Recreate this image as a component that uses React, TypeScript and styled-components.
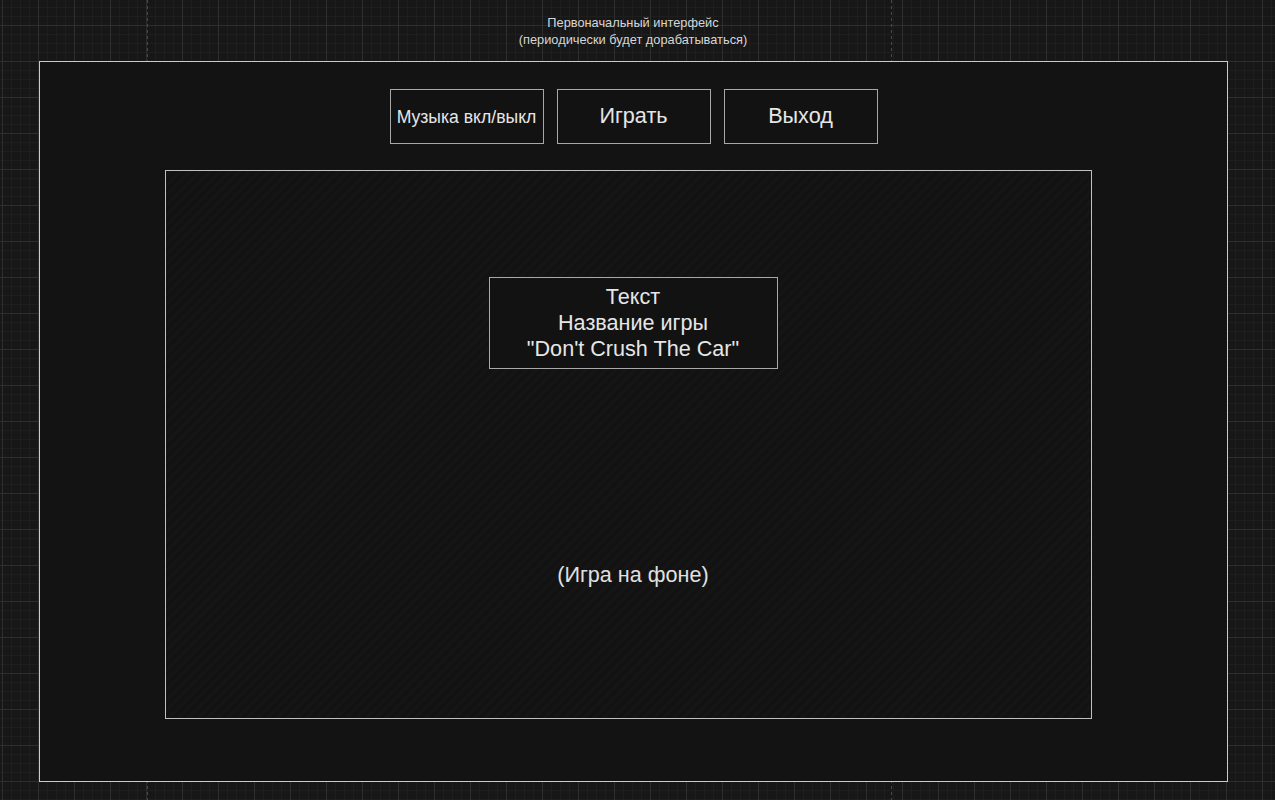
import React from "react";
import styled, { createGlobalStyle } from "styled-components";

const Global = createGlobalStyle`
  html, body { margin: 0; padding: 0; }
  body {
    width: 1275px;
    height: 800px;
    overflow: hidden;
    font-family: "Liberation Sans", Arial, sans-serif;
    background-color: #171717;
    background-image:
      repeating-linear-gradient(to bottom, #4a4a4a 0 3px, transparent 3px 6px),
      repeating-linear-gradient(to bottom, #4a4a4a 0 3px, transparent 3px 6px),
      linear-gradient(to right, #2e2e2e 1px, transparent 1px),
      linear-gradient(to bottom, #2e2e2e 1px, transparent 1px),
      linear-gradient(to right, #1e1e1e 1px, transparent 1px),
      linear-gradient(to bottom, #1e1e1e 1px, transparent 1px);
    background-size: 1px 100%, 1px 100%, 36px 36px, 36px 36px, 9px 9px, 9px 9px;
    background-position: 147px 0, 891px 0, 2px 25px, 2px 25px, 2px 25px, 2px 25px;
    background-repeat: no-repeat, no-repeat, repeat, repeat, repeat, repeat;
  }
`;

const Page = styled.div`
  display: flex;
  flex-direction: column;
  align-items: flex-start;
`;

const Caption = styled.div`
  width: 1266px;
  height: 61px;
  box-sizing: border-box;
  padding-top: 14px;
  text-align: center;
  color: #d6d6d6;
  font-size: 12.8px;
  line-height: 17px;
`;

const Frame = styled.div`
  margin-left: 39px;
  width: 1189px;
  height: 721px;
  box-sizing: border-box;
  border: 1px solid #cacaca;
  background: #131313;
  display: flex;
  flex-direction: column;
  padding: 27px 135px 0 125px;
`;

const Toolbar = styled.div`
  display: flex;
  justify-content: center;
  gap: 13px;
  padding-left: 10px;
`;

const MenuButton = styled.div<{ $size: number }>`
  width: 154px;
  height: 55px;
  box-sizing: border-box;
  border: 1px solid #a8a8a8;
  background: #121212;
  color: #e6e6e6;
  font-size: ${(p) => p.$size}px;
  display: flex;
  align-items: center;
  justify-content: center;
  white-space: nowrap;
  padding-top: ${(p) => (p.$size < 19 ? 2 : 0)}px;
  padding-bottom: ${(p) => (p.$size < 19 ? 0 : 1)}px;
`;

const GameArea = styled.div`
  margin-top: 26px;
  height: 549px;
  box-sizing: border-box;
  border: 1px solid #c0c0c0;
  background-color: #131313;
  background-image: repeating-linear-gradient(
    -45deg,
    #151515 0 3px,
    #121212 3px 7px
  );
  display: flex;
  flex-direction: column;
  align-items: center;
  padding-top: 106px;
  padding-left: 9px;
`;

const TitleBox = styled.div`
  width: 289px;
  height: 92px;
  box-sizing: border-box;
  border: 1px solid #a8a8a8;
  background: #121212;
  color: #e6e6e6;
  font-size: 21.6px;
  line-height: 26px;
  text-align: center;
  padding-top: 6px;
  white-space: nowrap;
`;

const Note = styled.div`
  margin-top: 193px;
  color: #e0e0e0;
  font-size: 21.6px;
  line-height: 26px;
`;

export default function App() {
  return (
    <>
      <Global />
      <Page>
        <Caption>
          Первоначальный интерфейс
          <br />
          (периодически будет дорабатываться)
        </Caption>
        <Frame>
          <Toolbar>
            <MenuButton $size={17.6}>Музыка вкл/выкл</MenuButton>
            <MenuButton $size={21.6}>Играть</MenuButton>
            <MenuButton $size={21.6}>Выход</MenuButton>
          </Toolbar>
          <GameArea>
            <TitleBox>
              Текст
              <br />
              Название игры
              <br />
              "Don't Crush The Car"
            </TitleBox>
            <Note>(Игра на фоне)</Note>
          </GameArea>
        </Frame>
      </Page>
    </>
  );
}
